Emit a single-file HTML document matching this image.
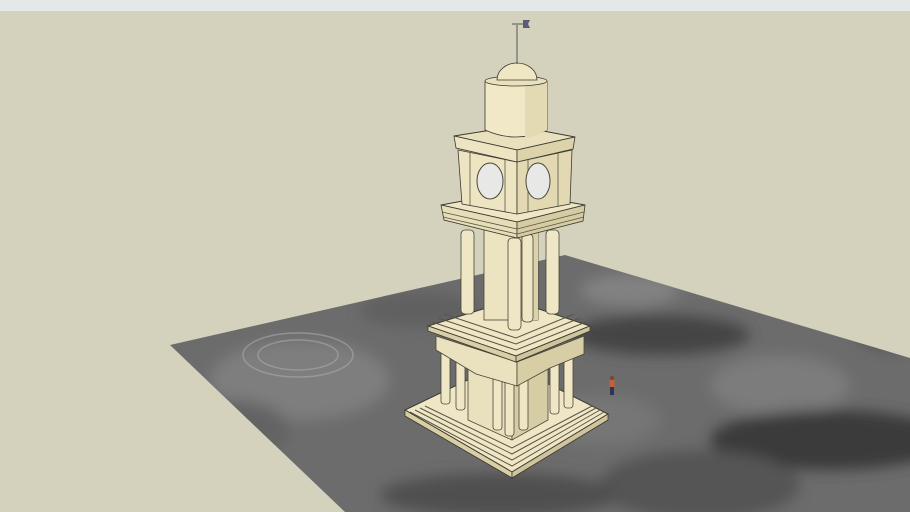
<!DOCTYPE html>
<html><head><meta charset="utf-8"><style>
html,body{margin:0;padding:0;width:910px;height:512px;overflow:hidden;background:#d4d2bd}
svg{display:block}
</style></head><body>
<svg width="910" height="512" viewBox="0 0 910 512" xmlns="http://www.w3.org/2000/svg">
<defs>
<filter id="b" x="-20%" y="-20%" width="140%" height="140%"><feGaussianBlur stdDeviation="7"/></filter>
<clipPath id="g"><polygon points="170,345 565,255 910,358 910,512 345,512"/></clipPath>
</defs>
<rect x="0" y="0" width="910" height="11" fill="#e5e8e8"/>
<rect x="0" y="11" width="910" height="501" fill="#d4d2bd"/>
<!-- ground -->
<polygon points="170,345 565,255 910,358 910,512 345,512" fill="#6c6c6c"/>
<g clip-path="url(#g)" filter="url(#b)">
<ellipse cx="300" cy="380" rx="90" ry="40" fill="#7e7e7e"/>
<ellipse cx="660" cy="335" rx="90" ry="20" fill="#454545"/>
<ellipse cx="780" cy="385" rx="70" ry="30" fill="#7c7c7c"/>
<ellipse cx="830" cy="440" rx="120" ry="30" fill="#3a3a3a"/>
<ellipse cx="630" cy="290" rx="50" ry="16" fill="#828282"/>
<ellipse cx="700" cy="485" rx="100" ry="35" fill="#555"/>
<ellipse cx="500" cy="495" rx="120" ry="22" fill="#505050"/>
<ellipse cx="420" cy="310" rx="60" ry="18" fill="#606060"/>
<ellipse cx="230" cy="430" rx="60" ry="30" fill="#646464"/>
<ellipse cx="890" cy="320" rx="40" ry="30" fill="#555"/>
<ellipse cx="600" cy="420" rx="60" ry="25" fill="#767676"/>
</g>
<g fill="none" stroke="#aaa" stroke-width="1.5" opacity="0.6">
<ellipse cx="298" cy="355" rx="55" ry="22"/>
<ellipse cx="298" cy="355" rx="40" ry="15"/>
</g>
<!-- base steps -->
<polygon points="405,410 505,362 608,414 512,472" fill="#efe6c5" stroke="#3c3a30" stroke-width="1"/>
<g stroke="#5a5646" stroke-width="1" fill="none">
<polyline points="405,410 512,472 608,414"/>
<polyline points="405,416 512,477 608,420"/>
<polyline points="410,412 512,466 604,412"/>
<polyline points="415,410 512,460 600,410"/>
<polyline points="420,408 512,454 596,408"/>
<polyline points="425,406 512,448 592,406"/>
</g>
<polygon points="405,410 512,472 512,478 405,416" fill="#d9cfa6" stroke="#3c3a30" stroke-width="0.8"/>
<polygon points="512,472 608,414 608,420 512,478" fill="#cfc59c" stroke="#3c3a30" stroke-width="0.8"/>
<!-- inner block -->
<polygon points="468,360 512,382 512,440 468,420" fill="#e9e0bd" stroke="#4a4638" stroke-width="0.8"/>
<polygon points="512,382 548,362 548,420 512,440" fill="#d7cda4" stroke="#4a4638" stroke-width="0.8"/>
<!-- lower columns -->
<g fill="#efe6c5" stroke="#4a4638" stroke-width="0.8">
<rect x="441" y="352" width="9" height="52" rx="3"/>
<rect x="456" y="358" width="9" height="52" rx="3"/>
<rect x="493" y="368" width="9" height="62" rx="3"/>
<rect x="505" y="372" width="9" height="64" rx="3"/>
<rect x="519" y="370" width="9" height="60" rx="3"/>
<rect x="550" y="358" width="9" height="56" rx="3"/>
<rect x="564" y="352" width="9" height="56" rx="3"/>
</g>
<!-- mid platform -->
<polygon points="436,336 517,362 517,386 476,374 436,350" fill="#eae1bf" stroke="#4a4638" stroke-width="0.8"/>
<polygon points="517,362 584,336 584,354 550,368 517,386" fill="#d8cea5" stroke="#4a4638" stroke-width="0.8"/>
<polygon points="428,326 512,300 590,326 516,356" fill="#efe6c5" stroke="#3c3a30" stroke-width="1"/>
<g stroke="#5a5646" stroke-width="1" fill="none">
<polyline points="428,326 516,356 590,326"/>
<polyline points="432,322 516,350 586,322"/>
<polyline points="438,318 516,344 580,318"/>
<polyline points="444,314 516,338 574,314"/>
</g>
<polygon points="428,326 516,356 516,362 428,331" fill="#d9cfa6" stroke="#3c3a30" stroke-width="0.8"/>
<polygon points="516,356 590,326 590,331 516,362" fill="#cfc59c" stroke="#3c3a30" stroke-width="0.8"/>
<!-- central cylinder -->
<rect x="484" y="230" width="54" height="90" fill="#ece3c0" stroke="#4a4638" stroke-width="0.8"/>
<rect x="515" y="230" width="23" height="90" fill="#dcd2aa"/>
<!-- upper columns -->
<g fill="#efe6c5" stroke="#4a4638" stroke-width="0.8">
<rect x="461" y="230" width="13" height="84" rx="4"/>
<rect x="508" y="238" width="13" height="92" rx="4"/>
<rect x="522" y="234" width="11" height="88" rx="4"/>
<rect x="546" y="230" width="13" height="84" rx="4"/>
</g>
<!-- cornice -->
<polygon points="441,205 512,192 585,205 517,222" fill="#efe6c5" stroke="#3c3a30" stroke-width="1"/>
<polygon points="441,205 517,222 517,238 444,220" fill="#e6ddb9" stroke="#3c3a30" stroke-width="0.8"/>
<polygon points="517,222 585,205 583,221 517,238" fill="#d6cca3" stroke="#3c3a30" stroke-width="0.8"/>
<g stroke="#5a5646" stroke-width="0.8" fill="none">
<polyline points="442,212 517,229 584,212"/>
<polyline points="443,217 517,234 584,217"/>
</g>
<!-- clock box -->
<polygon points="458,150 517,162 517,214 462,204" fill="#ede4c1" stroke="#3c3a30" stroke-width="0.8"/>
<polygon points="517,162 572,150 570,204 517,214" fill="#e2d8b2" stroke="#3c3a30" stroke-width="0.8"/>
<g fill="none" stroke="#5a5646" stroke-width="0.8">
<line x1="470" y1="153" x2="470" y2="206"/><line x1="505" y1="160" x2="505" y2="212"/>
<line x1="528" y1="160" x2="528" y2="212"/><line x1="558" y1="153" x2="558" y2="206"/>
</g>
<ellipse cx="490" cy="181" rx="13" ry="18" fill="#e8e8e6" stroke="#4a4638" stroke-width="1"/>
<ellipse cx="538" cy="181" rx="12" ry="18" fill="#e8e8e6" stroke="#4a4638" stroke-width="1"/>
<polygon points="454,136 517,126 575,137 517,150" fill="#e9e0bd" stroke="#3c3a30" stroke-width="1"/>
<polygon points="454,136 517,150 517,162 456,148" fill="#ede4c1" stroke="#3c3a30" stroke-width="0.8"/>
<polygon points="517,150 575,137 573,149 517,162" fill="#ddd3ab" stroke="#3c3a30" stroke-width="0.8"/>
<!-- cylinder top -->
<path d="M485,82 L485,130 Q516,144 547,130 L547,82 Z" fill="#f0e8c6" stroke="#3c3a30" stroke-width="0.8"/>
<path d="M525,82 L547,82 L547,130 Q536,136 525,138 Z" fill="#e3d9b2"/>
<ellipse cx="516" cy="81" rx="31" ry="5" fill="#e9e0bd" stroke="#3c3a30" stroke-width="0.8"/>
<path d="M497,80 A20,17 0 0 1 537,80 Z" fill="#efe6c3" stroke="#3c3a30" stroke-width="0.8"/>
<!-- weathervane -->
<line x1="517" y1="25" x2="517" y2="64" stroke="#555" stroke-width="1"/>
<line x1="512" y1="24" x2="524" y2="24" stroke="#555" stroke-width="1"/>
<polygon points="523,20 530,20 528,24 530,28 523,28" fill="#5b5c78"/>
<!-- person -->
<circle cx="612" cy="378" r="2" fill="#6b4a3a"/>
<rect x="609.5" y="380" width="5" height="7" fill="#c5603a"/>
<rect x="610" y="387" width="4" height="8" fill="#2d3550"/>
</svg>
</body></html>
